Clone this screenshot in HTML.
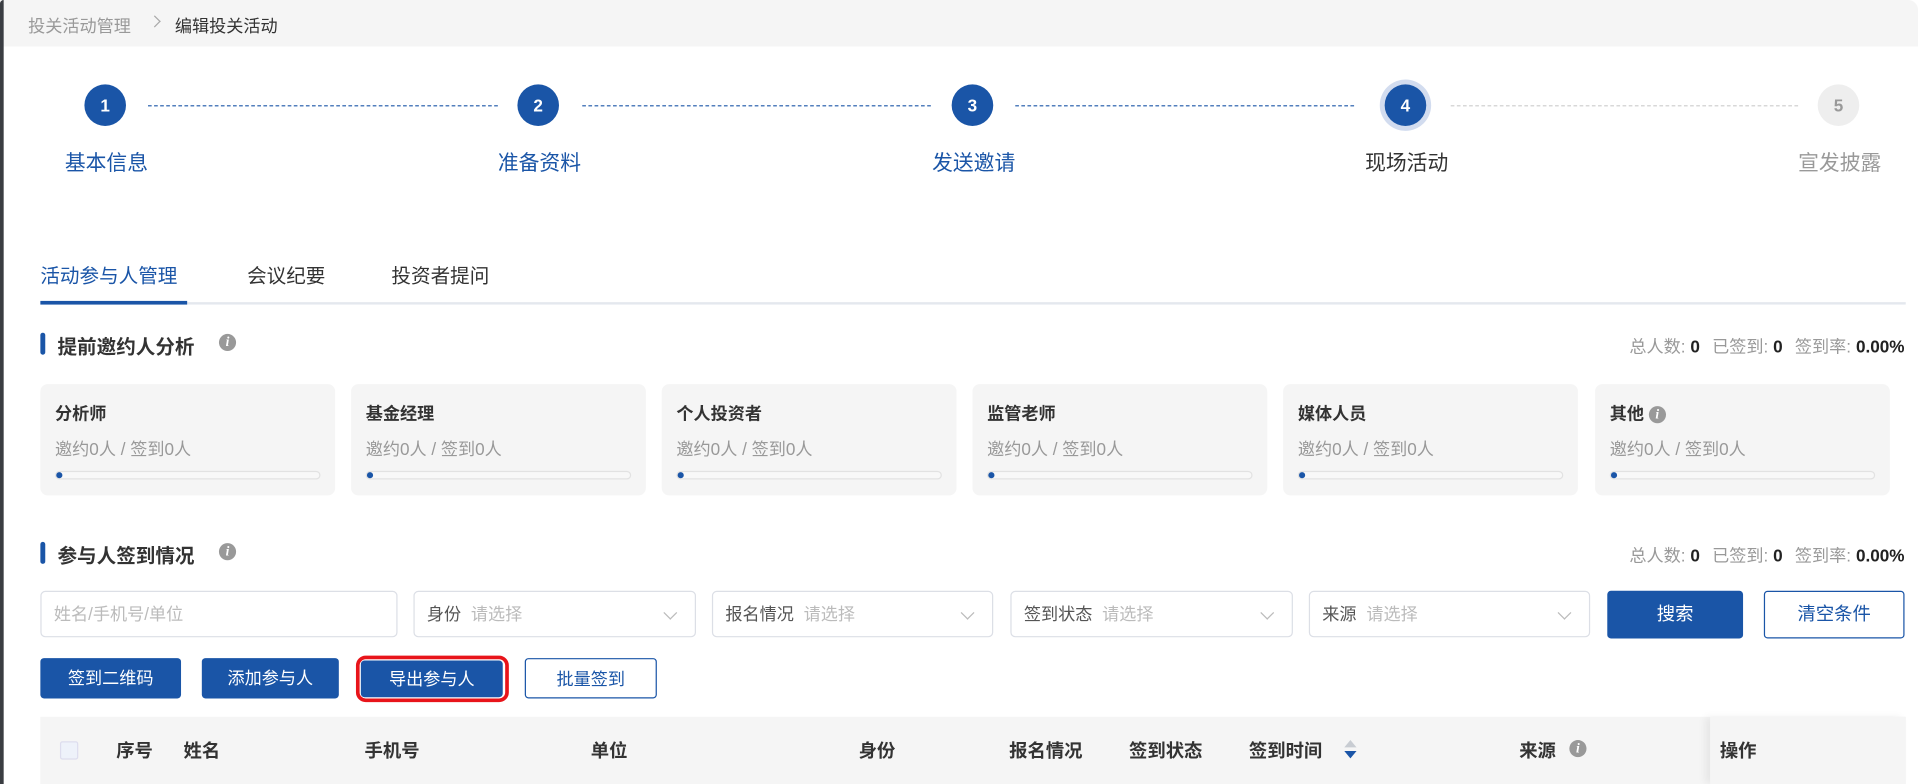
<!DOCTYPE html>
<html><head><meta charset="utf-8"><style>
*{margin:0;padding:0;box-sizing:border-box}
html,body{width:1918px;height:784px;overflow:hidden;background:#fff}
body{font-family:"Liberation Sans","Noto Sans CJK SC",sans-serif;color:#333}
#w{position:absolute;left:0;top:0;width:1568px;height:641px;transform:scale(1.2232);transform-origin:0 0}
.a{position:absolute;white-space:nowrap}
.hd{left:0;top:0;width:1568px;height:38px;background:#f5f5f5;border-top-right-radius:8px}
.lb{left:0;top:0;width:3px;height:641px;background:#3a3d42;border-top-left-radius:3px}
.c{width:34px;height:34px;border-radius:50%;background:#1a55a7;color:#fff;font-weight:bold;font-size:14px;text-align:center;line-height:34px}
.ln{height:0;border-top:1px dashed #1a55a7}
.sl{font-size:17px;text-align:center;width:120px}
.bar{width:4px;height:18px;background:#1a55a7;border-radius:2px}
.h2{font-size:16px;font-weight:bold;color:#333}
.ic{width:14px;height:14px;border-radius:50%;background:#999;color:#fff;font-size:11px;font-style:italic;font-weight:bold;text-align:center;line-height:14px;font-family:"Liberation Serif",serif}
.st{font-size:14px;color:#999}.st b{color:#222;margin:0 10px 0 4px}
.card{top:314px;width:241px;height:91px;background:#f5f5f5;border-radius:6px}
.card .t{position:absolute;left:12px;top:14px;font-size:14px;font-weight:bold;color:#333}
.card .s{position:absolute;left:12px;top:43px;font-size:14px;color:#999}
.card .p{position:absolute;left:12px;top:71px;width:217px;height:7px;border:1px solid #e2e2e2;border-radius:4px;background:#f8f8f8}
.card .p i{position:absolute;left:0;top:0;width:5px;height:5px;border-radius:50%;background:#1a55a7}
.in{top:483px;height:38px;border:1px solid #dcdfe6;border-radius:4px;font-size:14px;line-height:36px;padding-left:10px;color:#555}
.in span{color:#bbb;margin-left:8px}
.in .dv{position:absolute;right:16px;top:13px;width:8px;height:8px;border-right:1px solid #bbb;border-bottom:1px solid #bbb;transform:rotate(45deg)}
.btn{height:33px;top:538px;background:#1a55a7;color:#fff;font-size:14px;text-align:center;line-height:33px;border-radius:3px}
.ob{background:#fff;color:#1a55a7;border:1px solid #1a55a7}
.th{font-size:15px;font-weight:bold;color:#333;top:603px}
</style></head><body><div id="w">
<div class="a hd"></div><div class="a lb"></div>
<div class="a" style="left:23px;top:11px;font-size:14px;color:#999">投关活动管理</div>
<div class="a" style="left:123px;top:14px;width:7px;height:7px;border-right:1px solid #aaa;border-top:1px solid #aaa;transform:rotate(45deg)"></div>
<div class="a" style="left:143px;top:11px;font-size:14px;color:#333">编辑投关活动</div>

<div class="a c" style="left:69px;top:69px">1</div>
<div class="a c" style="left:423px;top:69px">2</div>
<div class="a c" style="left:778px;top:69px">3</div>
<div class="a" style="left:1128px;top:65px;width:42px;height:42px;border-radius:50%;background:#d2dcef"></div>
<div class="a c" style="left:1132px;top:69px">4</div>
<div class="a c" style="left:1486px;top:69px;background:#eee;color:#999">5</div>
<div class="a ln" style="left:121px;top:86px;width:286px"></div>
<div class="a ln" style="left:476px;top:86px;width:285px"></div>
<div class="a ln" style="left:830px;top:86px;width:277px"></div>
<div class="a ln" style="left:1186px;top:86px;width:284px;border-top-color:#ccc"></div>
<div class="a sl" style="left:27px;top:119px;color:#1a55a7">基本信息</div>
<div class="a sl" style="left:381px;top:119px;color:#1a55a7">准备资料</div>
<div class="a sl" style="left:736px;top:119px;color:#1a55a7">发送邀请</div>
<div class="a sl" style="left:1090px;top:119px;color:#333">现场活动</div>
<div class="a sl" style="left:1444px;top:119px;color:#999">宣发披露</div>

<div class="a" style="left:33px;top:212px;font-size:16px;color:#1a55a7">活动参与人管理</div>
<div class="a" style="left:202px;top:212px;font-size:16px;color:#333">会议纪要</div>
<div class="a" style="left:320px;top:212px;font-size:16px;color:#333">投资者提问</div>
<div class="a" style="left:33px;top:247px;width:1525px;height:2px;background:#e4e8ee"></div>
<div class="a" style="left:33px;top:246px;width:120px;height:3px;background:#1a55a7"></div>

<div class="a bar" style="left:33px;top:272px"></div>
<div class="a h2" style="left:47px;top:270px">提前邀约人分析</div>
<div class="a ic" style="left:179px;top:273px">i</div>
<div class="a st" style="right:11px;top:273px">总人数:<b>0</b>已签到:<b>0</b>签到率:<b style="margin-right:0">0.00%</b></div>

<div class="a card" style="left:33px"><div class="t">分析师</div><div class="s">邀约0人 / 签到0人</div><div class="p"><i></i></div></div>
<div class="a card" style="left:287px"><div class="t">基金经理</div><div class="s">邀约0人 / 签到0人</div><div class="p"><i></i></div></div>
<div class="a card" style="left:541px"><div class="t">个人投资者</div><div class="s">邀约0人 / 签到0人</div><div class="p"><i></i></div></div>
<div class="a card" style="left:795px"><div class="t">监管老师</div><div class="s">邀约0人 / 签到0人</div><div class="p"><i></i></div></div>
<div class="a card" style="left:1049px"><div class="t">媒体人员</div><div class="s">邀约0人 / 签到0人</div><div class="p"><i></i></div></div>
<div class="a card" style="left:1304px"><div class="t">其他 <span class="ic" style="display:inline-block;vertical-align:1px">i</span></div><div class="s">邀约0人 / 签到0人</div><div class="p"><i></i></div></div>

<div class="a bar" style="left:33px;top:443px"></div>
<div class="a h2" style="left:47px;top:441px">参与人签到情况</div>
<div class="a ic" style="left:179px;top:444px">i</div>
<div class="a st" style="right:11px;top:444px">总人数:<b>0</b>已签到:<b>0</b>签到率:<b style="margin-right:0">0.00%</b></div>

<div class="a in" style="left:33px;width:292px;color:#bbb">姓名/手机号/单位</div>
<div class="a in" style="left:338px;width:231px">身份<span>请选择</span><i class="dv"></i></div>
<div class="a in" style="left:582px;width:230px">报名情况<span>请选择</span><i class="dv"></i></div>
<div class="a in" style="left:826px;width:231px">签到状态<span>请选择</span><i class="dv"></i></div>
<div class="a in" style="left:1070px;width:230px">来源<span>请选择</span><i class="dv"></i></div>
<div class="a btn" style="left:1314px;top:483px;width:111px;height:39px;line-height:39px;font-size:15px">搜索</div>
<div class="a btn ob" style="left:1442px;top:483px;width:115px;height:39px;line-height:37px;font-size:15px">清空条件</div>

<div class="a btn" style="left:33px;width:115px">签到二维码</div>
<div class="a btn" style="left:165px;width:112px">添加参与人</div>
<div class="a" style="left:291px;top:536px;width:125px;height:38px;border:3px solid #e8141a;border-radius:8px"></div>
<div class="a btn" style="left:295px;top:540px;width:116px;height:30px;line-height:30px">导出参与人</div>
<div class="a btn ob" style="left:429px;width:108px">批量签到</div>

<div class="a" style="left:33px;top:586px;width:1525px;height:55px;background:#f5f5f5"></div>
<div class="a" style="left:1398px;top:586px;width:160px;height:55px;background:#f5f5f5;box-shadow:-4px 0 6px rgba(0,0,0,0.06)"></div>
<div class="a" style="left:49px;top:606px;width:15px;height:15px;border:1px solid #dde;background:#eef2fa;border-radius:2px"></div>
<div class="a th" style="left:95px">序号</div>
<div class="a th" style="left:150px">姓名</div>
<div class="a th" style="left:298px">手机号</div>
<div class="a th" style="left:483px">单位</div>
<div class="a th" style="left:702px">身份</div>
<div class="a th" style="left:825px">报名情况</div>
<div class="a th" style="left:923px">签到状态</div>
<div class="a th" style="left:1021px">签到时间</div>
<div class="a" style="left:1099px;top:605px;border:5px solid transparent;border-bottom:6px solid #c8ccd2;border-top:0"></div>
<div class="a" style="left:1099px;top:614px;border:5px solid transparent;border-top:6px solid #1a55a7;border-bottom:0"></div>
<div class="a th" style="left:1242px">来源</div>
<div class="a ic" style="left:1283px;top:605px">i</div>
<div class="a th" style="left:1406px">操作</div>
</div></body></html>
